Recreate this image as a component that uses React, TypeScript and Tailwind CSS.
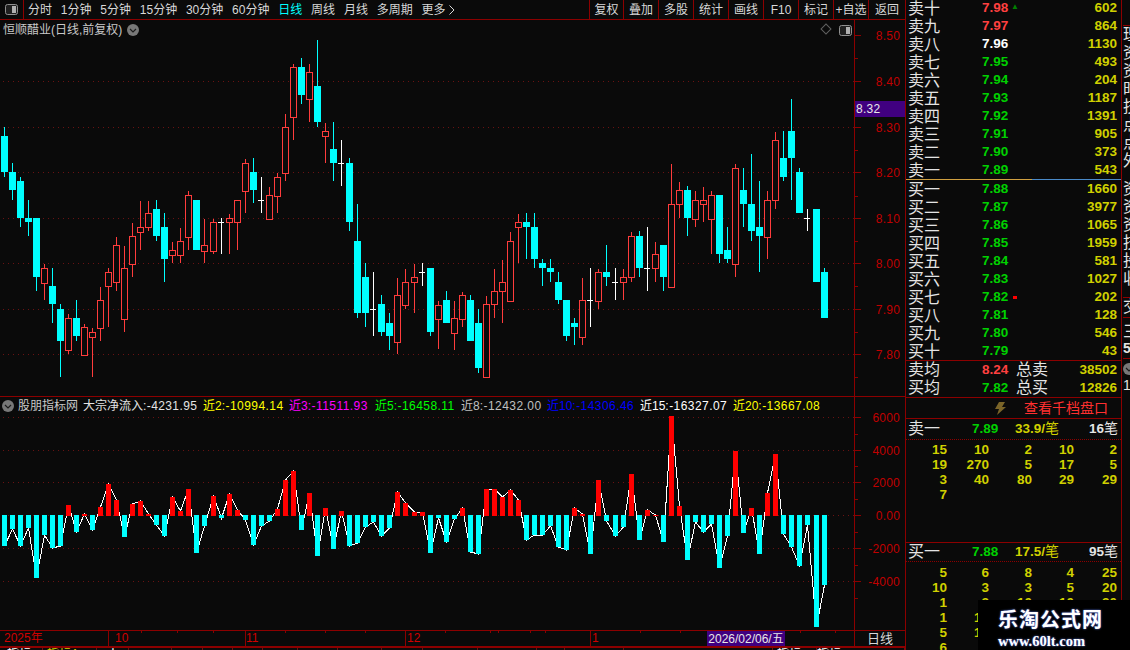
import React from "react"

const FONT = "[font-family:'Liberation_Sans','Noto_Sans_CJK_SC',sans-serif]"

// wick top, body top, body bottom, wick bottom, in page pixels. r red, c cyan, w doji
type Candle = [number, number, number, number, "r" | "c" | "w"]

const candles: Candle[] = [
  [127, 136, 172, 177, "c"], [163, 172, 190, 200, "c"], [177, 181, 218, 227, "c"], [200, 218, 222, 236, "c"],
  [218, 218, 277, 291, "c"], [264, 268, 283, 300, "r"], [268, 286, 304, 323, "c"], [304, 309, 341, 377, "c"],
  [314, 318, 350, 354, "r"], [300, 318, 336, 341, "c"], [324, 327, 355, 355, "r"], [328, 332, 337, 377, "r"],
  [287, 300, 328, 341, "r"], [268, 272, 286, 327, "r"], [237, 245, 282, 291, "r"], [246, 268, 319, 332, "r"],
  [223, 236, 264, 277, "r"], [201, 227, 232, 250, "r"], [201, 213, 227, 231, "r"], [200, 209, 236, 241, "c"],
  [213, 227, 259, 282, "c"], [242, 250, 255, 263, "r"], [228, 241, 255, 263, "r"], [191, 195, 237, 250, "r"],
  [200, 200, 250, 250, "c"], [219, 245, 251, 263, "r"], [219, 222, 251, 254, "r"], [218, 222, 222, 254, "w"],
  [214, 218, 222, 254, "r"], [200, 200, 222, 250, "r"], [159, 163, 191, 213, "r"], [158, 172, 190, 203, "c"],
  [177, 200, 200, 213, "w"], [187, 195, 219, 219, "r"], [173, 177, 196, 213, "r"], [114, 127, 173, 181, "r"],
  [64, 67, 117, 140, "r"], [58, 67, 95, 104, "c"], [64, 72, 99, 122, "r"], [40, 86, 122, 127, "c"],
  [123, 131, 136, 163, "r"], [122, 149, 163, 181, "c"], [140, 163, 163, 186, "w"], [158, 163, 222, 231, "c"],
  [204, 241, 313, 318, "c"], [263, 277, 313, 327, "c"], [272, 309, 309, 336, "w"], [295, 304, 332, 336, "c"],
  [313, 323, 336, 350, "c"], [278, 295, 342, 354, "r"], [269, 282, 305, 309, "r"], [264, 277, 282, 313, "r"],
  [263, 272, 272, 286, "w"], [268, 268, 332, 336, "c"], [301, 305, 319, 349, "r"], [291, 300, 323, 323, "c"],
  [301, 318, 333, 350, "r"], [292, 295, 319, 327, "r"], [295, 300, 341, 341, "c"], [309, 323, 368, 373, "c"],
  [296, 304, 377, 377, "r"], [269, 291, 304, 318, "r"], [260, 282, 291, 323, "r"], [232, 241, 301, 301, "r"],
  [214, 222, 227, 263, "r"], [213, 222, 227, 259, "c"], [213, 227, 259, 268, "c"], [259, 263, 268, 286, "c"],
  [259, 268, 272, 282, "c"], [272, 282, 300, 304, "c"], [300, 300, 336, 341, "c"], [318, 323, 327, 345, "c"],
  [278, 300, 337, 345, "r"], [268, 300, 300, 327, "w"], [269, 272, 301, 309, "r"], [245, 272, 277, 286, "c"],
  [268, 282, 282, 300, "w"], [269, 277, 282, 300, "r"], [232, 236, 277, 282, "r"], [231, 236, 268, 277, "c"],
  [227, 268, 268, 291, "w"], [242, 254, 268, 282, "r"], [245, 245, 277, 291, "c"], [164, 204, 287, 287, "r"],
  [182, 190, 204, 218, "r"], [186, 190, 218, 236, "c"], [191, 200, 219, 227, "r"], [187, 200, 204, 222, "r"],
  [191, 195, 219, 254, "r"], [195, 195, 254, 263, "c"], [227, 250, 259, 263, "c"], [164, 168, 264, 277, "r"],
  [168, 190, 204, 227, "c"], [154, 204, 231, 241, "c"], [181, 227, 236, 272, "c"], [191, 200, 237, 259, "r"],
  [132, 140, 200, 209, "r"], [131, 158, 177, 181, "c"], [99, 131, 158, 200, "c"], [168, 172, 213, 213, "c"],
  [209, 218, 218, 231, "w"], [209, 209, 282, 282, "c"], [268, 272, 318, 318, "c"],
]

// bar ends measured on a 3x crop, y = 400 + v / 3; above the zero line means red
const flows = [
  438, 387, 438, 384, 534, 405, 444, 438, 315, 396, 342, 390, 321, 252, 300, 411, 312, 303, 342, 375, 408, 291, 333, 267, 459, 378,
  288, 354, 282, 330, 360, 435, 378, 363, 327, 240, 213, 390, 279, 468, 324, 447, 333, 438, 429, 381, 366, 408, 384, 276, 309, 336,
  336, 459, 354, 426, 357, 324, 456, 462, 267, 267, 291, 270, 300, 420, 405, 405, 378, 441, 450, 324, 342, 462, 240, 363, 408, 381,
  222, 420, 330, 345, 426, 48, 318, 480, 366, 396, 372, 504, 408, 153, 399, 324, 462, 279, 162, 402, 441, 498, 375, 681, 555,
]

const colX = (i: number) => Math.floor(4 + 8.04 * i)

const asks = [
  { label: "卖十", price: "7.98", vol: "602", color: "text-[#ff4040]", mark: "up" },
  { label: "卖九", price: "7.97", vol: "864", color: "text-[#ff4040]" },
  { label: "卖八", price: "7.96", vol: "1130", color: "text-white" },
  { label: "卖七", price: "7.95", vol: "493", color: "text-[#00d000]" },
  { label: "卖六", price: "7.94", vol: "204", color: "text-[#00d000]" },
  { label: "卖五", price: "7.93", vol: "1187", color: "text-[#00d000]" },
  { label: "卖四", price: "7.92", vol: "1391", color: "text-[#00d000]" },
  { label: "卖三", price: "7.91", vol: "905", color: "text-[#00d000]" },
  { label: "卖二", price: "7.90", vol: "373", color: "text-[#00d000]" },
  { label: "卖一", price: "7.89", vol: "543", color: "text-[#00d000]" },
]

const bids = [
  { label: "买一", price: "7.88", vol: "1660", color: "text-[#00d000]" },
  { label: "买二", price: "7.87", vol: "3977", color: "text-[#00d000]" },
  { label: "买三", price: "7.86", vol: "1065", color: "text-[#00d000]" },
  { label: "买四", price: "7.85", vol: "1959", color: "text-[#00d000]" },
  { label: "买五", price: "7.84", vol: "581", color: "text-[#00d000]" },
  { label: "买六", price: "7.83", vol: "1027", color: "text-[#00d000]" },
  { label: "买七", price: "7.82", vol: "202", color: "text-[#00d000]", mark: "dot" },
  { label: "买八", price: "7.81", vol: "128", color: "text-[#00d000]" },
  { label: "买九", price: "7.80", vol: "546", color: "text-[#00d000]" },
  { label: "买十", price: "7.79", vol: "43", color: "text-[#00d000]" },
]

const askOrders = [["15", "10", "2", "10", "2"], ["19", "270", "5", "17", "5"], ["3", "40", "80", "29", "29"], ["7", "", "", "", ""]]
const bidOrders = [
  ["5", "6", "8", "4", "25"], ["10", "3", "3", "5", "20"], ["1", "2", "10", "10", "30"],
  ["1", "16", "", "", ""], ["5", "12", "", "", ""], ["6", "", "", "", ""],
]

const studies = [
  { name: "近2", value: ":-10994.14", color: "text-[#ffff00]", w: "w-[86px]" },
  { name: "近3", value: ":-11511.93", color: "text-[#ff00ff]", w: "w-[86px]" },
  { name: "近5", value: ":-16458.11", color: "text-[#00ff00]", w: "w-[86px]" },
  { name: "近8", value: ":-12432.00", color: "text-[#c0c0c0]", w: "w-[86px]" },
  { name: "近10", value: ":-14306.46", color: "text-[#0000ff]", w: "w-[93px]" },
  { name: "近15", value: ":-16327.07", color: "text-white", w: "w-[93px]" },
  { name: "近20", value: ":-13667.08", color: "text-[#ffff00]", w: "w-[93px]" },
]

const bottomTabs = [
  { w: "w-[43px]", pl: "pl-[7px]", text: "指标", color: "text-white" },
  { w: "w-[54px]", pl: "pl-[4px]", text: "指标A", color: "text-[#d0d000]" },
  { w: "w-[32px]", pl: "pl-[10px]", text: "人", color: "text-white" },
  { w: "w-[43px]", pl: "", text: "", color: "" }, { w: "w-[31px]", pl: "", text: "", color: "" },
  { w: "w-[30px]", pl: "", text: "", color: "" }, { w: "w-[30px]", pl: "", text: "", color: "" },
  { w: "w-[35px]", pl: "", text: "", color: "" }, { w: "w-[40px]", pl: "", text: "", color: "" },
  { w: "w-[44px]", pl: "", text: "", color: "" }, { w: "w-[41px]", pl: "", text: "", color: "" },
  { w: "w-[55px]", pl: "", text: "", color: "" }, { w: "w-[59px]", pl: "", text: "", color: "" },
  { w: "w-[28px]", pl: "", text: "", color: "" }, { w: "w-[59px]", pl: "", text: "", color: "" },
  { w: "w-[149px]", pl: "", text: "", color: "" },
  { w: "w-[44px]", pl: "pl-[4px]", text: "指标", color: "text-white" },
  { w: "w-[88px]", pl: "", text: "指标", color: "text-white" },
]

const sideChars = ["理", "资", "资", "时", "技", "点", "点", "外"]
const sideChars2 = ["资", "资", "资", "技", "投", "收"]

function PanelIcon() {
  return (
    <svg width="13" height="11" viewBox="0 0 13 11">
      <rect x="0.5" y="0.5" width="12" height="10" rx="2" fill="#202020" stroke="#909090" />
      <rect x="7" y="2" width="4" height="7" fill="#b0b0b0" />
    </svg>
  )
}

function ChevronDot({ className = "" }: { className?: string }) {
  return (
    <svg width="12" height="12" viewBox="0 0 12 12" className={className}>
      <circle cx="6" cy="6" r="6" fill="#787878" />
      <path d="M3 5 L6 8 L9 5" fill="none" stroke="#1c1c1c" strokeWidth="1.2" />
    </svg>
  )
}

function PriceChart() {
  const grid = [81, 127, 172, 218, 263, 309, 354]
  return (
    <svg width="854" height="376" viewBox="0 20 854 376" className="block" shapeRendering="crispEdges">
      {grid.map((y) => (
        <line key={y} x1="3" x2="854" y1={y + 0.5} y2={y + 0.5} stroke="#6a1212" strokeDasharray="1 4" />
      ))}
      {candles.map(([hi, top, bot, lo, kind], i) => {
        const x = colX(i)
        if (kind === "w") {
          return (
            <g key={i} fill="#ffffff">
              <rect x={x} y={hi} width="1" height={lo - hi} />
              <rect x={x - 3} y={top} width="6" height="1" />
            </g>
          )
        }
        if (kind === "c") {
          return (
            <g key={i} fill="#00ffff">
              <rect x={x} y={hi} width="1" height={lo - hi} />
              <rect x={x - 3} y={top} width="7" height={bot - top} />
            </g>
          )
        }
        return (
          <g key={i}>
            <rect x={x} y={hi} width="1" height={lo - hi} fill="#ff3c3c" />
            <rect x={x - 2.5} y={top + 0.5} width="6" height={bot - top} fill="#0a0a0a" stroke="#ff3c3c" />
          </g>
        )
      })}
    </svg>
  )
}

function FlowChart() {
  const grid = [417, 450, 482, 515, 548, 581]
  const line = flows.map((v, i) => `${colX(i) + 0.5},${400 + v / 3}`).join(" ")
  return (
    <svg width="854" height="233" viewBox="0 397 854 233" className="block" shapeRendering="crispEdges">
      {grid.map((y) => (
        <line key={y} x1="3" x2="854" y1={y + 0.5} y2={y + 0.5} stroke="#6a1212" strokeDasharray="1 4" />
      ))}
      <polyline points={line} fill="none" stroke="#ffffff" strokeWidth="1" />
      {flows.map((v, i) => {
        const y = 400 + v / 3
        const red = v < 346
        return red ? (
          <rect key={i} x={colX(i) - 2} y={y} width="5" height={516 - y} fill="#ff0000" />
        ) : (
          <rect key={i} x={colX(i) - 2} y={515} width="5" height={y - 515} fill="#00ffff" />
        )
      })}
    </svg>
  )
}

function Axis({ top, height, ticks, labels }: { top: number; height: number; ticks: number[]; labels: [number, string][] }) {
  return (
    <svg width="50" height={height} viewBox={`0 ${top} 50 ${height}`} className="block">
      {ticks.map((y) => (
        <rect key={y} x="0" y={y} width="3" height="1" fill="#8c0000" />
      ))}
      {labels.map(([y, t]) => (
        <g key={t}>
          <rect x="0" y={y} width="6" height="1" fill="#8c0000" />
          <text x="45" y={y + 5} textAnchor="end" fontSize="12" fontFamily="Liberation Sans" letterSpacing="0.2" fill="#c00000">
            {t}
          </text>
        </g>
      ))}
    </svg>
  )
}

function BookRow({ row }: { row: { label: string; price: string; vol: string; color: string; mark?: string } }) {
  return (
    <div className="flex h-[18px] items-center pl-[2px] pr-[4px] pt-px">
      <span className="w-[74px] text-[16px] leading-none text-[#e4e4e4]">{row.label}</span>
      <span className={`w-[32px] text-[13.5px] font-bold ${row.color}`}>{row.price}</span>
      {row.mark === "up" && <span className="mb-[3px] -ml-[3px] text-[8px] leading-none text-[#008000]">▲</span>}
      {row.mark === "dot" && <span className="-ml-px h-[3px] w-[4px] bg-[#ff0000]" />}
      <span className="ml-auto text-[13.5px] font-bold text-[#d0d000]">{row.vol}</span>
    </div>
  )
}

function OrderGrid({ rows, className = "" }: { rows: string[][]; className?: string }) {
  return (
    <div className={`pr-[4px] ${className}`}>
      {rows.map((r, i) => (
        <div key={i} className="grid h-[15px] grid-cols-[41px_42px_43px_42px_43px] items-center text-right text-[13.5px] font-bold text-[#d0d000]">
          {r.map((n, j) => (
            <span key={j}>{n}</span>
          ))}
        </div>
      ))}
    </div>
  )
}

function TradeHead({ label, price, size, count, className = "" }: { label: string; price: string; size: string; count: string; className?: string }) {
  return (
    <div className={`flex items-center pl-[2px] pr-[3px] ${className}`}>
      <span className="w-[64px] text-[16px] leading-none text-[#e4e4e4]">{label}</span>
      <span className="w-[43px] text-[13.5px] font-bold text-[#00d000]">{price}</span>
      <span className="text-[13.5px] font-bold text-[#d0d000]">{size}/<span className="text-[14px] font-normal">笔</span></span>
      <span className="ml-auto text-[13.5px] font-bold text-[#e4e4e4]">{count}<span className="text-[14px] font-normal">笔</span></span>
    </div>
  )
}

export default function App() {
  const leftTools = [
    { t: "分时" }, { t: "1分钟" }, { t: "5分钟" }, { t: "15分钟" }, { t: "30分钟" }, { t: "60分钟" },
    { t: "日线", on: true }, { t: "周线" }, { t: "月线" }, { t: "多周期" },
  ]
  const rightTools = ["复权", "叠加", "多股", "统计", "画线", "F10", "标记", "+自选", "返回"]

  return (
    <div className={`relative flex h-[650px] w-[1130px] overflow-hidden bg-[#0a0a0a] text-[12px] ${FONT}`}>
      <div className="flex w-[905px] flex-col">
        {/* Toolbar */}
        <div className="flex h-[20px] border-b border-[#8c0000] text-[#d8d8d8]">
          <div className="flex w-[24px] items-center justify-center border-r border-[#8c0000]">
            <PanelIcon />
          </div>
          <div className="flex items-center gap-[8.8px] pl-[4px]">
            {leftTools.map((b) => (
              <span key={b.t} className={b.on ? "text-[#00ffff]" : ""}>{b.t}</span>
            ))}
            <span className="flex items-center gap-[3px]">
              更多
              <svg width="6" height="10" viewBox="0 0 6 10">
                <path d="M0.5 0.5 L5 5 L0.5 9.5" fill="none" stroke="#d8d8d8" />
              </svg>
            </span>
          </div>
          <div className="ml-auto flex">
            {rightTools.map((t, i) => (
              <span key={t} className={`flex items-center justify-center border-l border-[#8c0000] ${i === 0 ? "w-[34px]" : "w-[35px]"} ${t === "返回" ? "w-[37px]" : ""}`}>
                {t}
              </span>
            ))}
          </div>
        </div>

        {/* Price pane */}
        <div className="flex h-[377px] border-b border-[#8c0000]">
          <div className="relative w-[855px] border-r border-[#8c0000]">
            <PriceChart />
            <div className="absolute left-[3px] top-[1px] flex items-center gap-[5px] leading-[18px] text-[#c8c8c8]">
              恒顺醋业(日线,前复权)
              <ChevronDot />
            </div>
            <div className="absolute left-[822px] top-[5px] h-[8px] w-[8px] rotate-45 border border-[#606060]" />
            <div className="absolute left-[839px] top-[5px]">
              <PanelIcon />
            </div>
          </div>
          <div className="relative w-[50px]">
            <Axis
              top={20}
              height={376}
              ticks={[58, 104, 150, 196, 241, 286, 332, 377]}
              labels={[[35, "8.50"], [81, "8.40"], [127, "8.30"], [172, "8.20"], [218, "8.10"], [263, "8.00"], [309, "7.90"], [354, "7.80"]]}
            />
            <div className="absolute left-0 top-[81px] flex h-[16px] w-[50px] items-center bg-[#400080] pl-[1px] tracking-[0.3px] text-[#e8e8e8]">
              8.32
            </div>
          </div>
        </div>

        {/* Flow pane */}
        <div className="flex h-[234px] border-b border-[#8c0000]">
          <div className="relative w-[855px] border-r border-[#8c0000]">
            <FlowChart />
            <div className="absolute left-[2px] top-0 flex h-[17px] items-center whitespace-nowrap leading-none">
              <ChevronDot />
              <span className="ml-[4px] w-[65px] text-[#c8c8c8]">股朋指标网</span>
              <span className="w-[120px] text-[#e4e4e4]">大宗净流入<span className="tracking-[0.4px]">:-4231.95</span></span>
              {studies.map((s) => (
                <span key={s.name} className={`${s.w} ${s.color}`}>{s.name}<span className="tracking-[0.45px]">{s.value}</span></span>
              ))}
            </div>
          </div>
          <Axis
            top={397}
            height={233}
            ticks={[434, 466, 499, 532, 565, 598]}
            labels={[[417, "6000"], [450, "4000"], [482, "2000"], [515, "0.00"], [548, "-2000"], [581, "-4000"]]}
          />
        </div>

        {/* Date axis */}
        <div className="flex h-[17px] border-b-2 border-[#8c0000]">
          <div className="relative w-[855px] border-r border-[#8c0000] text-[#d00000]">
            <svg width="854" height="15" className="absolute left-0 top-0" shapeRendering="crispEdges">
              {[108, 245, 405, 590].map((x) => (
                <rect key={x} x={x} y="0" width="1" height="15" fill="#8c0000" />
              ))}
              {[141, 177, 213, 285, 325, 365, 445, 490, 530, 498, 545, 640, 680, 720, 760, 800, 835].map((x) => (
                <rect key={x} x={x} y="0" width="1" height="2" fill="#8c0000" />
              ))}
            </svg>
            <span className="absolute left-[4px] top-0 leading-[15px]">2025年</span>
            <span className="absolute left-[115px] top-0 leading-[15px]">10</span>
            <span className="absolute left-[246px] top-0 leading-[15px]">11</span>
            <span className="absolute left-[407px] top-0 leading-[15px]">12</span>
            <span className="absolute left-[592px] top-0 leading-[15px]">1</span>
            <span className="absolute left-[707px] top-0 flex h-[15px] w-[78px] items-center justify-center bg-[#400080] text-[#e8e8e8]">
              2026/02/06/五
            </span>
          </div>
          <div className="flex w-[50px] items-center justify-center text-[13px] leading-none text-[#d8d8d8]">日线</div>
        </div>

        {/* Clipped tab strip */}
        <div className="flex flex-1 overflow-hidden">
          {bottomTabs.map((tab, i) => (
            <span key={i} className={`${tab.w} ${tab.pl} ${tab.color} shrink-0 border-r border-[#6a1212] leading-[12px]`}>{tab.text}</span>
          ))}
        </div>
      </div>

      {/* Order book */}
      <div className="w-[217px] border-x border-[#8c0000]">
        <div className="-mt-px">
          {asks.map((r) => <BookRow key={r.label} row={r} />)}
        </div>
        <div className="flex h-px">
          <div className="w-[126px] bg-[#d0a040]" />
          <div className="flex-1 bg-[#4a8ac8]" />
        </div>
        <div className="border-b border-[#8c0000]">
          {bids.map((r) => <BookRow key={r.label} row={r} />)}
        </div>
        <div className="border-b border-[#8c0000]">
          <div className="flex h-[18px] items-center pl-[2px] pr-[4px]">
            <span className="w-[74px] text-[16px] leading-none text-[#e4e4e4]">卖均</span>
            <span className="w-[34px] text-[13.5px] font-bold text-[#ff4040]">8.24</span>
            <span className="text-[16px] leading-none text-[#e4e4e4]">总卖</span>
            <span className="ml-auto text-[13.5px] font-bold text-[#d0d000]">38502</span>
          </div>
          <div className="flex h-[18px] items-center pl-[2px] pr-[4px]">
            <span className="w-[74px] text-[16px] leading-none text-[#e4e4e4]">买均</span>
            <span className="w-[34px] text-[13.5px] font-bold text-[#00d000]">7.82</span>
            <span className="text-[16px] leading-none text-[#e4e4e4]">总买</span>
            <span className="ml-auto text-[13.5px] font-bold text-[#d0d000]">12826</span>
          </div>
        </div>
        <div className="flex h-[21px] items-center border-b border-[#8c0000] pl-[88px]">
          <svg width="12" height="13" viewBox="0 0 12 13">
            <path d="M5 0 H11 L8 5 H12 L3 13 L5 7 H1 Z" fill="#7a6428" />
          </svg>
          <span className="ml-[18px] text-[14px] leading-none text-[#ff3030]">查看千档盘口</span>
        </div>
        <div className="h-[124px] border-b border-[#8c0000]">
          <TradeHead label="卖一" price="7.89" size="33.9" count="16" className="h-[20px]" />
          <div className="h-px border-t border-dotted border-[#8c0000]" />
          <OrderGrid rows={askOrders} />
        </div>
        <div>
          <TradeHead label="买一" price="7.88" size="17.5" count="95" className="h-[18px]" />
          <div className="h-px border-t border-dotted border-[#8c0000]" />
          <OrderGrid rows={bidOrders} className="mt-px" />
        </div>
      </div>

      {/* Far right panel, cut by the window edge */}
      <div className="w-[8px] overflow-hidden pl-[1px] text-[16px] leading-[18px] text-[#e4e4e4]">
        <div className="h-[26px] border-b border-[#8c0000]" />
        {sideChars.map((c, i) => <div key={i} className="h-[18px] whitespace-nowrap">{c}</div>)}
        <div className="h-[10px]" />
        {sideChars2.map((c, i) => <div key={i} className="h-[18px] whitespace-nowrap">{c}</div>)}
        <div className="h-[9px]" />
        <div className="h-[21px] whitespace-nowrap border-y border-[#8c0000]">交</div>
        <div className="mt-[5px] h-[18px] whitespace-nowrap">三</div>
        <div className="h-[18px] whitespace-nowrap border-b border-[#8c0000] text-[14px] font-bold leading-[14px]">5</div>
        <div className="flex h-[20px] items-center"><ChevronDot className="shrink-0" /></div>
        <div className="whitespace-nowrap text-[14px] leading-[12px]">1</div>
      </div>

      {/* Watermark */}
      <div className="absolute bottom-0 right-0 flex h-[50px] w-[152px] flex-col bg-black pl-[20px] pt-[8px]">
        <span className="text-[20px] font-bold leading-[24px] tracking-[1px] text-white [text-shadow:0_0_2px_#6080ff]">乐淘公式网</span>
        <span className="font-['Liberation_Serif'] text-[14.5px] font-bold leading-[18px] text-white [text-shadow:0_0_2px_#6080ff]">www.60lt.com</span>
      </div>
    </div>
  )
}
